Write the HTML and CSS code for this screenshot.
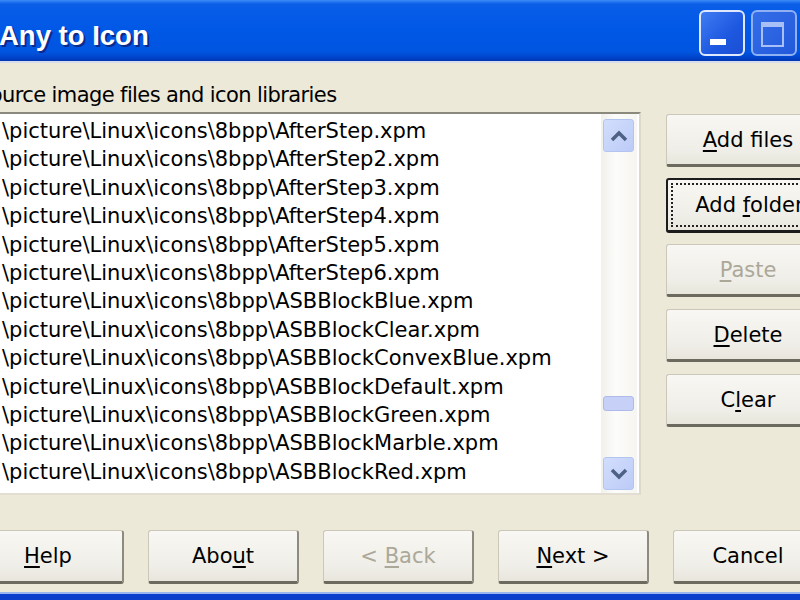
FILE: index.html
```html
<!DOCTYPE html>
<html>
<head>
<meta charset="utf-8">
<link rel="stylesheet" href="styles.css">
</head>
<body>
<div class="window">
  <div class="titlebar">
    <span class="title">Any to Icon</span>
    <div class="controls">
      <div class="cbtn"><span class="min-glyph"></span></div>
      <div class="cbtn dim"><span class="max-glyph"></span></div>
    </div>
  </div>
  <div class="content">
    <div class="label">Source image files and icon libraries</div>
    <div class="work">
      <div class="listbox">
        <ul class="items">
          <li>\picture\Linux\icons\8bpp\AfterStep.xpm</li>
          <li>\picture\Linux\icons\8bpp\AfterStep2.xpm</li>
          <li>\picture\Linux\icons\8bpp\AfterStep3.xpm</li>
          <li>\picture\Linux\icons\8bpp\AfterStep4.xpm</li>
          <li>\picture\Linux\icons\8bpp\AfterStep5.xpm</li>
          <li>\picture\Linux\icons\8bpp\AfterStep6.xpm</li>
          <li>\picture\Linux\icons\8bpp\ASBBlockBlue.xpm</li>
          <li>\picture\Linux\icons\8bpp\ASBBlockClear.xpm</li>
          <li>\picture\Linux\icons\8bpp\ASBBlockConvexBlue.xpm</li>
          <li>\picture\Linux\icons\8bpp\ASBBlockDefault.xpm</li>
          <li>\picture\Linux\icons\8bpp\ASBBlockGreen.xpm</li>
          <li>\picture\Linux\icons\8bpp\ASBBlockMarble.xpm</li>
          <li>\picture\Linux\icons\8bpp\ASBBlockRed.xpm</li>
        </ul>
        <div class="scrollbar">
          <div class="sbtn">
            <svg width="18" height="12" viewBox="0 0 18 12"><path d="M2 10 L9 3 L16 10" fill="none" stroke="#4d6185" stroke-width="3.5"/></svg>
          </div>
          <div class="track">
            <div class="thumb" style="margin-top:244px"></div>
          </div>
          <div class="sbtn">
            <svg width="18" height="12" viewBox="0 0 18 12"><path d="M2 2 L9 9 L16 2" fill="none" stroke="#4d6185" stroke-width="3.5"/></svg>
          </div>
        </div>
      </div>
      <div class="side">
        <div class="btn wide"><span><u>A</u>dd files</span></div>
        <div class="btn wide default"><div class="focus"><span>Add <u>f</u>older</span></div></div>
        <div class="btn wide disabled"><span><u>P</u>aste</span></div>
        <div class="btn wide"><span><u>D</u>elete</span></div>
        <div class="btn wide"><span>C<u>l</u>ear</span></div>
      </div>
    </div>
    <div class="footer">
      <div class="btn"><span><u>H</u>elp</span></div>
      <div class="btn"><span>Abo<u>u</u>t</span></div>
      <div class="btn disabled"><span>&lt; <u>B</u>ack</span></div>
      <div class="btn"><span><u>N</u>ext &gt;</span></div>
      <div class="btn"><span>Cancel</span></div>
    </div>
  </div>
  <div class="bottomedge"></div>
</div>
</body>
</html>
```
FILE: styles.css
```css
html, body {
  margin: 0;
  padding: 0;
}
body {
  width: 800px;
  height: 600px;
  overflow: hidden;
  background: #ece9d8;
  font-family: "DejaVu Sans", "Liberation Sans", sans-serif;
  font-size: 21px;
  color: #000;
}
.window {
  display: flex;
  flex-direction: column;
  height: 600px;
}
.titlebar {
  height: 61px;
  flex: none;
  display: flex;
  align-items: center;
  background: linear-gradient(to bottom, #3d8cf7 0px, #0a5ee8 4px, #0058e6 30px, #0055e0 52px, #0042c8 58px, #0036b0 61px);
  border-bottom: 2px solid #d6dcec;
}
.title {
  font-family: "Liberation Sans", Arial, sans-serif;
  font-weight: bold;
  font-size: 27.5px;
  color: #fff;
  text-shadow: 2px 2px 0 #0a2a8c;
  margin-left: -1px;
  margin-top: 10px;
}
.controls {
  margin-left: auto;
  margin-right: 3px;
  display: flex;
  gap: 6px;
  padding-top: 4px;
}
.cbtn {
  width: 42px;
  height: 42px;
  border: 2px solid #dfe8fd;
  border-radius: 6px;
  background: linear-gradient(135deg, #3f7cf2, #1d58e0 60%, #1a4fd3);
  position: relative;
}
.cbtn.dim {
  border-color: #8fb0f3;
  background: linear-gradient(135deg, #356ee8, #2259db);
}
.min-glyph {
  position: absolute;
  left: 9px;
  top: 27px;
  width: 16px;
  height: 6px;
  background: #fff;
}
.max-glyph {
  position: absolute;
  left: 8px;
  top: 10px;
  width: 19px;
  height: 18px;
  border: 2px solid #a8c0f5;
  border-top-width: 5px;
}
.content {
  margin-left: -40px;
  padding-top: 19px;
  flex: 1;
  display: flex;
  flex-direction: column;
}
.label {
  height: 26px;
  line-height: 26px;
  padding-left: 17px;
  margin-bottom: 4px;
  white-space: nowrap;
  letter-spacing: -0.6px;
}
.work {
  display: flex;
  align-items: flex-start;
}
.listbox {
  flex: none;
  width: 677px;
  height: 379px;
  box-sizing: content-box;
  border: 2px solid;
  border-color: #8b897e #dcd9cb #e2dfd2 #8b897e;
  background: #fff;
  display: flex;
}
.items {
  list-style: none;
  margin: 0;
  padding: 3px 0 0 40px;
  flex: 1;
  white-space: nowrap;
  overflow: hidden;
}
.items li {
  height: 28.4px;
  line-height: 28.4px;
}
.scrollbar {
  flex: none;
  width: 36px;
  margin-right: 2px;
  display: flex;
  flex-direction: column;
  padding: 5px 3px 3px 2px;
  box-sizing: border-box;
  background: linear-gradient(to right, #f1f0ea, #fcfcfa 40%, #f6f5f1);
}
.sbtn {
  height: 33px;
  border-radius: 3px;
  background: linear-gradient(to bottom right, #d2defd, #bccbf7);
  border: 1px solid #b4c4f1;
  box-sizing: border-box;
  display: flex;
  align-items: center;
  justify-content: center;
}
.track {
  flex: 1;
}
.thumb {
  height: 15px;
  border-radius: 3px;
  background: #c7d0f6;
  border: 1px solid #aebbe9;
  box-sizing: border-box;
}
.side {
  flex: none;
  display: flex;
  flex-direction: column;
  gap: 12px;
  margin-left: 25px;
  padding-top: 2px;
}
.btn {
  flex: none;
  width: 151px;
  height: 53px;
  box-sizing: border-box;
  border: 1px solid #cbc8ba;
  border-right: 2px solid #8d8b80;
  border-bottom: 3px solid #6c6a5f;
  border-radius: 3px;
  background: linear-gradient(to bottom, #f8f7f3, #efeee8 70%, #e8e6dc);
  display: flex;
  align-items: center;
  justify-content: center;
  white-space: nowrap;
}
.btn.wide {
  width: 165px;
}
.btn u {
  text-decoration-thickness: 2px;
  text-underline-offset: 3px;
}
.btn.default {
  border: 2px solid #1c1c1c;
  border-bottom-width: 3px;
  height: 55px;
  margin-top: -1px;
  margin-bottom: -1px;
  align-items: stretch;
  justify-content: flex-start;
}
.focus {
  border: 2px dotted #222;
  margin: 3px;
  flex: 1;
  display: flex;
  align-items: center;
  justify-content: center;
  padding-left: 2px;
}
.btn.disabled {
  color: #aca899;
}
.footer {
  display: flex;
  gap: 24px;
  padding-left: 13px;
  margin-top: 35px;
}
.footer .btn {
  height: 54px;
}
.bottomedge {
  height: 8px;
  flex: none;
  border-top: 2px solid #9ab6ee;
  background: #0b3fcb;
  box-sizing: border-box;
}
```
